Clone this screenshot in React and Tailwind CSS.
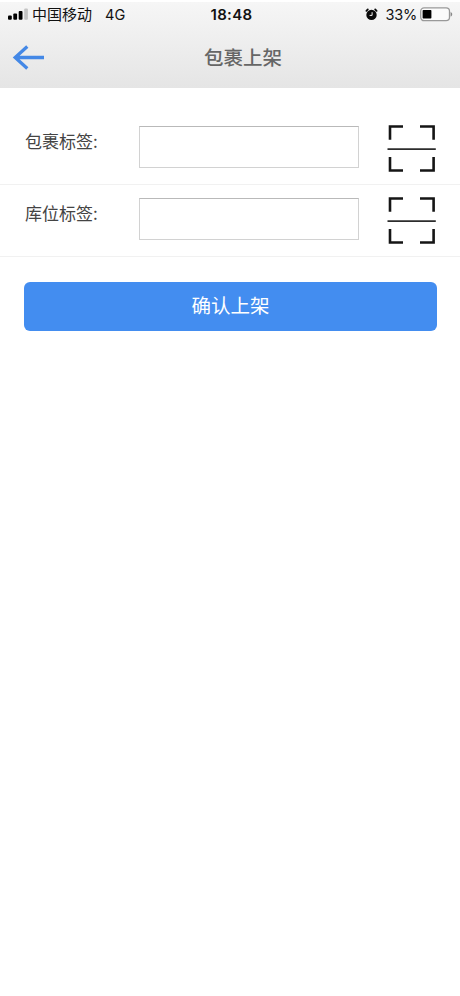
import React, { useState } from 'react';

const SignalIcon = () => (
  <svg width="20" height="12" viewBox="0 0 20 12" className="mb-px shrink-0">
    <rect x="0" y="7.4" width="3.8" height="4.4" rx="1" fill="#000" />
    <rect x="5.3" y="5.4" width="3.8" height="6.4" rx="1" fill="#000" />
    <rect x="10.7" y="3" width="3.8" height="8.8" rx="1" fill="#000" />
    <rect x="16.2" y="0.4" width="3.7" height="11.4" rx="1" fill="#c4c4c4" />
  </svg>
);

const AlarmIcon = () => (
  <svg width="13" height="13" viewBox="0 0 13 13" className="mb-px shrink-0">
    <circle cx="6.5" cy="6.9" r="5.2" fill="#0a0a0a" />
    <path d="M1.4 2.8 2.8 1.4M11.6 2.8 10.2 1.4" stroke="#0a0a0a" strokeWidth="1.8" strokeLinecap="round" />
    <path d="M7.1 4.2v3.2H4.6" fill="none" stroke="#f5f5f5" strokeWidth="1" />
  </svg>
);

const BatteryIcon = () => (
  <svg width="33" height="15" viewBox="0 0 33 15" className="shrink-0">
    <rect x="0.7" y="0.9" width="28.8" height="12.8" rx="3.4" fill="#fbfbfb" stroke="#999" strokeWidth="1.3" />
    <rect x="2.6" y="3" width="8.8" height="8.6" rx="0.8" fill="#000" />
    <path d="M30.6 5v4.6c2.2-.8 2.2-3.8 0-4.6Z" fill="#888" />
  </svg>
);

const BackArrow = () => (
  <svg width="33" height="26" viewBox="0 0 33 26" fill="none" stroke="#4488e6" strokeWidth="3.3">
    <path d="M15.3 1.6 3.2 12.5l12.1 10.9M2.8 12.5H32" />
  </svg>
);

const ScanIcon = () => (
  <svg width="50" height="50" viewBox="0 0 50 50" fill="none" stroke="#151515" strokeWidth="2.6">
    <path d="M16 2.5H3V15.7M33 2.5h13.6V15.7M3 33v13.5H16M46.6 33v13.5H33" />
    <path d="M.5 25.2h48.3" stroke="#2c2c2c" strokeWidth="1.7" />
  </svg>
);

const ScanField = ({ label, value, onChange }) => (
  <div className="flex h-[72px] items-start border-b border-[#f1f1f1] pl-[25px] pt-[13px]">
    <label className="mt-[3px] w-[114px] whitespace-nowrap font-['Noto_Sans_CJK_SC',sans-serif] text-[17px] leading-6 text-[#444]">
      {label}
    </label>
    <input
      type="text"
      value={value}
      onChange={(e) => onChange(e.target.value)}
      className="h-[42px] w-[220px] border border-[#d2d2d2] border-t-[#b9b9b9] bg-white px-2 text-base outline-none"
    />
    <button type="button" className="-mt-[2px] ml-7">
      <ScanIcon />
    </button>
  </div>
);

const App = () => {
  const [parcel, setParcel] = useState('');
  const [location, setLocation] = useState('');

  return (
    <div className="min-h-[996px] w-[460px] bg-white font-['Inter','Noto_Sans_CJK_SC',sans-serif]">
      <header className="h-[88px] border-t-2 border-white bg-linear-to-b from-[#f6f6f6] to-[#e5e5e5]">
        {/* Status bar */}
        <div className="grid h-[25px] grid-cols-3 items-center text-[15px] leading-6 text-[#111]">
          <div className="flex items-center whitespace-nowrap pl-2">
            <SignalIcon />
            <span className="ml-1">中国移动</span>
            <span className="ml-[13px] text-[14.5px]">4G</span>
          </div>
          <div className="pl-[3px] text-center font-semibold tracking-[0.3px]">18:48</div>
          <div className="flex items-center justify-end pr-[7px]">
            <AlarmIcon />
            <span className="ml-[7px] mr-[3px] text-[14.5px] tracking-[-0.2px]">33%</span>
            <BatteryIcon />
          </div>
        </div>
        {/* Title bar */}
        <div className="grid h-[61px] grid-cols-[60px_1fr_60px] items-center">
          <button type="button" className="pl-3">
            <BackArrow />
          </button>
          <h1 className="pl-[26px] pt-[3px] text-center text-[19.5px] font-medium text-[#666]">包裹上架</h1>
        </div>
      </header>

      <main className="pt-[25px]">
        <div className="flex flex-col">
          <ScanField label="包裹标签:" value={parcel} onChange={setParcel} />
          <ScanField label="库位标签:" value={location} onChange={setLocation} />
        </div>
        <button
          type="button"
          className="mx-6 mt-[25px] h-[49px] w-[413px] rounded-md bg-[#438df0] pt-px text-[19.5px] text-white"
        >
          确认上架
        </button>
      </main>
    </div>
  );
};

export default App;
